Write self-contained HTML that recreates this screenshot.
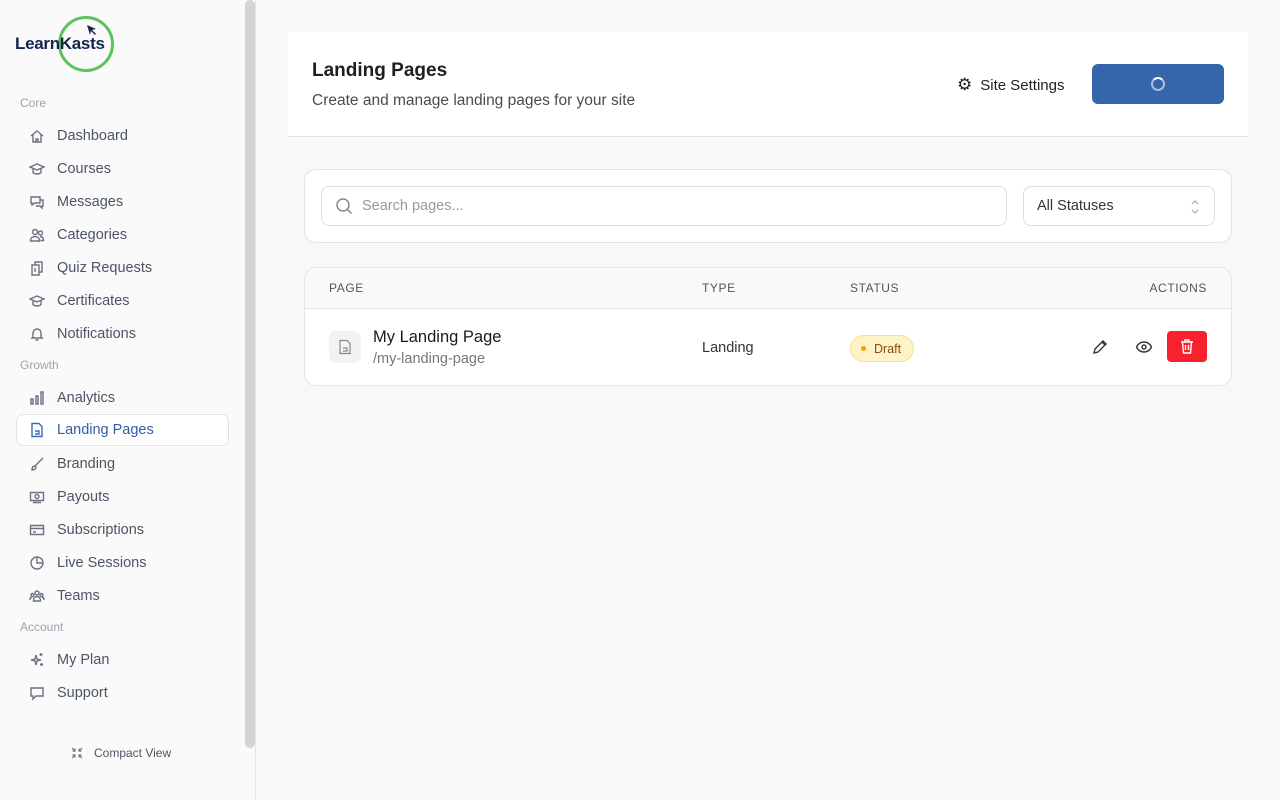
<!DOCTYPE html>
<html><head><meta charset="utf-8"><style>
*{box-sizing:border-box;margin:0;padding:0}
body{width:1280px;height:800px;overflow:hidden;background:#f8f8f8;font-family:"Liberation Sans",sans-serif;position:relative}
.sb{position:absolute;left:0;top:0;width:256px;height:800px;background:#fafafa;border-right:1px solid #e5e5e5}
.scroll{position:absolute;left:245px;top:0;width:10px;height:748px;background:#d4d4d6;border-radius:5px}
.sec{position:absolute;left:20px;font-size:12px;color:#9ca3af}
.it{position:absolute;left:16px;width:213px;height:32px;font-size:14.5px;color:#4b5563;display:flex;align-items:center;padding-left:41px}
.it svg{position:absolute;left:13px;top:8px;width:16px;height:16px;fill:none;stroke:#6b7280;stroke-width:1.4}
.act{background:#fff;border:1px solid #e3e3e3;border-radius:7px;color:#2f5ea8;padding-left:40px}
.act svg{stroke:#3b6bb5}
.card{position:absolute;background:#fff;border:1px solid #e6e6e6;border-radius:12px}
</style></head><body>
<div class="sb">
 <div style="position:absolute;left:58px;top:16px;width:56px;height:56px;border:3px solid #5ec25e;border-radius:50%"></div>
 <div style="position:absolute;left:15px;top:34px;font-size:17px;font-weight:bold;color:#13254f;letter-spacing:-0.3px">LearnKasts</div>
 <svg style="position:absolute;left:86px;top:24px" width="12" height="12" viewBox="0 0 12 12"><path d="M1 1l9 4-4 1 4 4-1 1-4-4-1 4z" fill="#13254f"/></svg>
 <div class="sec" style="top:96px">Core</div>
 <div class="it" style="top:120px"><svg viewBox="0 0 16 16"><path d="M2 8l6-5 6 5M4 6.5V14h8V6.5M7 14v-3h2v3"/></svg>Dashboard</div>
 <div class="it" style="top:153px"><svg viewBox="0 0 16 16"><path d="M1 6l7-3 7 3-7 3zM4 7.5v4c2 2 6 2 8 0v-4"/></svg>Courses</div>
 <div class="it" style="top:186px"><svg viewBox="0 0 16 16"><path d="M2 3h9v6H6l-3 2V9H2zM11 6h3v6h-1v2l-2-2H7"/></svg>Messages</div>
 <div class="it" style="top:219px"><svg viewBox="0 0 16 16"><circle cx="6" cy="5" r="2.5"/><circle cx="11.5" cy="6" r="2"/><path d="M1.5 14c0-3 2-4.5 4.5-4.5s4.5 1.5 4.5 4.5zM11 9.5c2 0 3.5 1 3.5 4h-3"/></svg>Categories</div>
 <div class="it" style="top:252px"><svg viewBox="0 0 16 16"><path d="M3 5h7v10H3zM6 5V2h7v10h-3M6 8v4"/></svg>Quiz Requests</div>
 <div class="it" style="top:285px"><svg viewBox="0 0 16 16"><path d="M1 6l7-3 7 3-7 3zM4 7.5v4c2 2 6 2 8 0v-4"/></svg>Certificates</div>
 <div class="it" style="top:318px"><svg viewBox="0 0 16 16"><path d="M4 11V7a4 4 0 018 0v4l1 1H3zM6.5 14h3"/></svg>Notifications</div>
 <div class="sec" style="top:358px">Growth</div>
 <div class="it" style="top:382px"><svg viewBox="0 0 16 16"><path d="M2 9h2v5H2zM7 6h2v8H7zM12 2h2v12h-2z"/></svg>Analytics</div>
 <div class="it act" style="top:414px"><svg viewBox="0 0 16 16" style="top:7px;left:12px"><path d="M3 1.5h7l3 3V14.5H3zM6 9h4v3H6"/></svg>Landing Pages</div>
 <div class="it" style="top:448px"><svg viewBox="0 0 16 16"><path d="M14 2L6 10M6 10c-2 0-3 1-3 4 2 0 4-1 4-3z"/></svg>Branding</div>
 <div class="it" style="top:481px"><svg viewBox="0 0 16 16"><path d="M1.5 3.5h13v8h-13zM4 13.5h8"/><circle cx="8" cy="7.5" r="2"/></svg>Payouts</div>
 <div class="it" style="top:514px"><svg viewBox="0 0 16 16"><path d="M1.5 3.5h13v9h-13zM1.5 6.5h13M4 10h3"/></svg>Subscriptions</div>
 <div class="it" style="top:547px"><svg viewBox="0 0 16 16"><circle cx="8" cy="8" r="6"/><path d="M8 2v6h6"/></svg>Live Sessions</div>
 <div class="it" style="top:580px"><svg viewBox="0 0 16 16"><circle cx="8" cy="5" r="2"/><circle cx="3.5" cy="7" r="1.5"/><circle cx="12.5" cy="7" r="1.5"/><path d="M4.5 13c0-3 1.5-4.5 3.5-4.5s3.5 1.5 3.5 4.5zM1 12c0-2 1-3 2.5-3M15 12c0-2-1-3-2.5-3"/></svg>Teams</div>
 <div class="sec" style="top:620px">Account</div>
 <div class="it" style="top:644px"><svg viewBox="0 0 16 16"><path d="M7 3l1 4 4 1-4 1-1 4-1-4-4-1 4-1zM12 1v3M10.5 2.5h3M12.5 11v3M11 12.5h3"/></svg>My Plan</div>
 <div class="it" style="top:677px"><svg viewBox="0 0 16 16"><path d="M2 3h12v8H7l-3 3v-3H2z"/></svg>Support</div>
 <svg style="position:absolute;left:71px;top:747px" width="12" height="12" viewBox="0 0 12 12" fill="none" stroke="#6b7280" stroke-width="1.2"><path d="M1 1l3 3M4 1.5V4H1.5M11 1L8 4M8 1.5V4h2.5M1 11l3-3M4 10.5V8H1.5M11 11L8 8M8 10.5V8h2.5"/></svg>
 <div style="position:absolute;left:94px;top:746px;font-size:12px;color:#4b5563">Compact View</div>
 <div class="scroll"></div>
</div>

<div style="position:absolute;left:288px;top:32px;width:960px;height:105px;background:#fff;border-bottom:1px solid #e3e3e3">
 <div style="position:absolute;left:24px;top:28px;font-size:19px;font-weight:bold;color:#1f1f1f">Landing Pages</div>
 <div style="position:absolute;left:24px;top:60px;font-size:15.5px;color:#4b4b4b">Create and manage landing pages for your site</div>
 <div style="position:absolute;left:669px;top:43px;font-size:15px;color:#1f1f1f"><span style="font-size:17px;margin-right:8px">⚙</span>Site Settings</div>
 <div style="position:absolute;left:804px;top:32px;width:132px;height:40px;background:#3565aa;border-radius:6px">
  <div style="position:absolute;left:59px;top:13px;width:14px;height:14px;border:2.5px solid #a9bede;border-top-color:#fff;border-radius:50%"></div>
 </div>
</div>

<div class="card" style="left:304px;top:169px;width:928px;height:74px">
 <div style="position:absolute;left:16px;top:16px;width:686px;height:40px;border:1px solid #ddd;border-radius:8px">
  <svg style="position:absolute;left:13px;top:10px" width="18" height="18" viewBox="0 0 18 18" fill="none" stroke="#888" stroke-width="1.5"><circle cx="8" cy="8" r="6"/><path d="M12.5 12.5l4 4"/></svg>
  <div style="position:absolute;left:40px;top:11px;font-size:14.5px;color:#999">Search pages...</div>
 </div>
 <div style="position:absolute;left:718px;top:16px;width:192px;height:40px;border:1px solid #ddd;border-radius:8px">
  <div style="position:absolute;left:13px;top:11px;font-size:14.5px;color:#333">All Statuses</div>
  <svg style="position:absolute;left:165px;top:11px" width="12" height="18" viewBox="0 0 12 18" fill="none" stroke="#aaa" stroke-width="1.2"><path d="M3 6l3-3 3 3M3 12l3 3 3-3"/></svg>
 </div>
</div>

<div class="card" style="left:304px;top:267px;width:928px;height:119px;overflow:hidden">
 <div style="height:41px;background:#f9f9f9;border-bottom:1px solid #e6e6e6;font-size:12px;color:#555;letter-spacing:0.6px;position:relative">
  <span style="position:absolute;left:24px;top:13px">PAGE</span>
  <span style="position:absolute;left:397px;top:13px">TYPE</span>
  <span style="position:absolute;left:545px;top:13px">STATUS</span>
  <span style="position:absolute;right:24px;top:13px">ACTIONS</span>
 </div>
 <div style="position:absolute;left:24px;top:63px;width:32px;height:32px;background:#f2f2f2;border-radius:7px">
  <svg style="position:absolute;left:9px;top:8px" width="14" height="16" viewBox="0 0 14 16" fill="none" stroke="#888" stroke-width="1.2"><path d="M2 1.5h7l3 3v10H2zM5 9h4v3H5"/></svg>
 </div>
 <div style="position:absolute;left:68px;top:60px;font-size:16.5px;color:#1a1a1a">My Landing Page</div>
 <div style="position:absolute;left:68px;top:83px;font-size:14.5px;color:#777">/my-landing-page</div>
 <div style="position:absolute;left:397px;top:72px;font-size:14.5px;color:#333">Landing</div>
 <div style="position:absolute;left:545px;top:67px;width:64px;height:27px;background:#fdf3c7;border:1px solid #f5df8c;border-radius:14px;font-size:12.5px;color:#8a4b0f;padding:6px 0 0 23px">
  <span style="position:absolute;left:10px;top:10px;width:5px;height:5px;border-radius:50%;background:#f59e0b"></span>Draft</div>
 <svg style="position:absolute;left:786px;top:70px" width="18" height="18" viewBox="0 0 18 18" fill="none" stroke="#333" stroke-width="1.4"><path d="M3 15l1-4 8-8 3 3-8 8zM11 4l3 3"/></svg>
 <svg style="position:absolute;left:830px;top:70px" width="18" height="18" viewBox="0 0 18 18" fill="none" stroke="#333" stroke-width="1.4"><path d="M1.5 9c2-4 5-5 7.5-5s5.5 1 7.5 5c-2 4-5 5-7.5 5s-5.5-1-7.5-5z"/><circle cx="9" cy="9" r="2"/></svg>
 <div style="position:absolute;left:862px;top:63px;width:40px;height:31px;background:#f8222e;border-radius:4px">
  <svg style="position:absolute;left:13px;top:8px" width="14" height="15" viewBox="0 0 14 15" fill="none" stroke="#fff" stroke-width="1.4"><path d="M1 3h12M5 3V1h4v2M2.5 3l1 11h7l1-11M5.5 6v5M8.5 6v5"/></svg>
 </div>
</div>
</body></html>
